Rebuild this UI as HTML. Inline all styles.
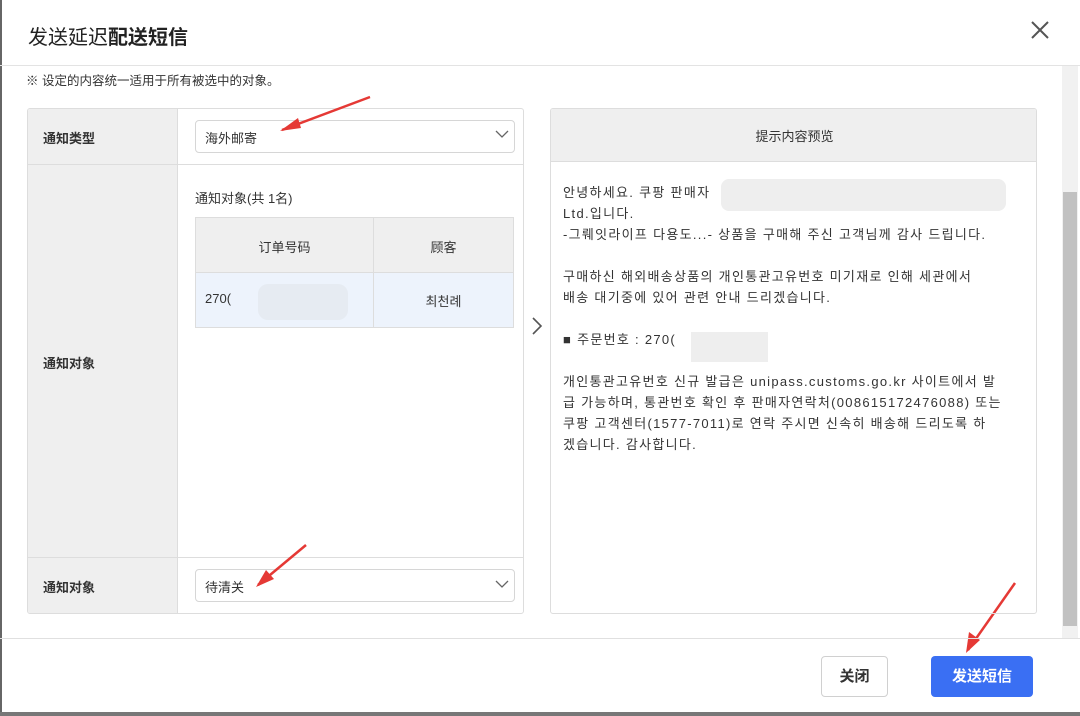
<!DOCTYPE html>
<html><head><meta charset="utf-8"><style>
*{box-sizing:border-box;margin:0;padding:0}
body{width:1080px;height:716px;background:#fff;font-family:"Liberation Sans","Noto Sans CJK SC",sans-serif;color:#333;position:relative;overflow:hidden}
.a{position:absolute}
.lbl{background:#efefef}
.t{font-size:13px;line-height:21px;color:#333;font-family:"Liberation Sans","Noto Sans CJK KR",sans-serif;letter-spacing:1.3px;white-space:nowrap}
</style></head><body>
<div class="a" style="left:0;top:0;width:2px;height:716px;background:#666"></div>
<div class="a" style="left:0;top:712px;width:1080px;height:4px;background:#777"></div>
<div class="a" style="left:28px;top:21px;font-size:20px;color:#222">发送延迟<b>配送短信</b></div>
<svg class="a" style="left:1030px;top:20px" width="20" height="20"><path d="M2 2L18 18M18 2L2 18" stroke="#555" stroke-width="2"/></svg>
<div class="a" style="left:0;top:65px;width:1080px;height:1px;background:#e3e3e3"></div>
<div class="a" style="left:26px;top:70px;font-size:12.5px;color:#333">※ 设定的内容统一适用于所有被选中的对象。</div>
<div class="a" style="left:1062px;top:66px;width:16px;height:573px;background:#f1f1f1"></div>
<div class="a" style="left:1063px;top:192px;width:14px;height:434px;background:#c1c1c1"></div>
<div class="a" style="left:27px;top:108px;width:497px;height:506px;border:1px solid #ddd;border-radius:3px;overflow:hidden">
 <div class="a lbl" style="left:0;top:0;width:150px;height:504px;border-right:1px solid #ddd"></div>
 <div class="a" style="left:0;top:55px;width:497px;height:1px;background:#ddd"></div>
 <div class="a" style="left:0;top:448px;width:497px;height:1px;background:#ddd"></div>
 <div class="a" style="left:15px;top:19px;font-size:13px;font-weight:bold">通知类型</div>
 <div class="a" style="left:15px;top:244px;font-size:13px;font-weight:bold">通知对象</div>
 <div class="a" style="left:15px;top:468px;font-size:13px;font-weight:bold">通知对象</div>
 <div class="a" style="left:167px;top:11px;width:320px;height:33px;border:1px solid #d6d6d6;border-radius:4px;font-size:13px;padding:7px 9px">海外邮寄</div>
 <div class="a" style="left:167px;top:460px;width:320px;height:33px;border:1px solid #d6d6d6;border-radius:4px;font-size:13px;padding:7px 9px">待清关</div>
 <div class="a" style="left:167px;top:79px;font-size:13px">通知对象(共 1名)</div>
 <div class="a" style="left:167px;top:108px;width:319px;height:111px;border:1px solid #ddd">
  <div class="a" style="left:0;top:0;width:317px;height:55px;background:#efefef;border-bottom:1px solid #ddd"></div>
  <div class="a" style="left:0;top:55px;width:317px;height:54px;background:#edf3fc"></div>
  <div class="a" style="left:177px;top:0;width:1px;height:109px;background:#ddd"></div>
  <div class="a" style="left:0;top:19px;width:177px;text-align:center;font-size:13px">订单号码</div>
  <div class="a" style="left:178px;top:19px;width:139px;text-align:center;font-size:13px">顾客</div>
  <div class="a" style="left:9px;top:73px;font-size:13px">270(</div>
  <div class="a" style="left:62px;top:66px;width:90px;height:36px;background:#e4e8ef;border-radius:10px;opacity:.8"></div>
  <div class="a" style="left:178px;top:73px;width:139px;text-align:center;font-size:13px;font-family:'Noto Sans CJK KR',sans-serif">최천례</div>
 </div>
</div>
<svg class="a" style="left:0;top:0" width="1080" height="716">
<path d="M282 130L370 97" stroke="#e53935" stroke-width="2.5"/><path d="M280 131L298 118L301 128Z" fill="#e53935"/>
<path d="M258 585L306 545" stroke="#e53935" stroke-width="2.5"/><path d="M256 587L266 570L274 579Z" fill="#e53935"/>
<path d="M968 650L1015 583" stroke="#e53935" stroke-width="2.5"/><path d="M966 653L969 632L980 640Z" fill="#e53935"/>
<path d="M533 318L541 326L533 334" fill="none" stroke="#555" stroke-width="1.6"/>
<path d="M496 131L502 137L508 131" fill="none" stroke="#666" stroke-width="1.3"/>
<path d="M496 581L502 587L508 581" fill="none" stroke="#666" stroke-width="1.3"/>
</svg>
<div class="a" style="left:550px;top:108px;width:487px;height:506px;border:1px solid #ddd;border-radius:3px;overflow:hidden">
 <div class="a lbl" style="left:0;top:0;width:487px;height:53px;border-bottom:1px solid #ddd;text-align:center;font-size:13px;padding-top:17px">提示内容预览</div>
 <div class="a t" style="left:12px;top:73px;width:470px">안녕하세요. 쿠팡 판매자<br>Ltd.입니다.<br>-그뤠잇라이프 다용도...- 상품을 구매해 주신 고객님께 감사 드립니다.<br><br>구매하신 해외배송상품의 개인통관고유번호 미기재로 인해 세관에서<br>배송 대기중에 있어 관련 안내 드리겠습니다.<br><br>■ 주문번호 : 270(<br><br>개인통관고유번호 신규 발급은 unipass.customs.go.kr 사이트에서 발<br>급 가능하며, 통관번호 확인 후 판매자연락처(008615172476088) 또는<br>쿠팡 고객센터(1577-7011)로 연락 주시면 신속히 배송해 드리도록 하<br>겠습니다. 감사합니다.</div>
 <div class="a" style="left:170px;top:70px;width:285px;height:32px;background:#eeeeee;border-radius:8px"></div>
 <div class="a" style="left:140px;top:223px;width:77px;height:30px;background:#eeeeee"></div>
</div>
<div class="a" style="left:0;top:638px;width:1080px;height:1px;background:#e0e0e0"></div>
<div class="a" style="left:821px;top:656px;width:67px;height:41px;border:1px solid #d0d0d0;border-radius:4px;text-align:center;font-size:15px;font-weight:bold;line-height:39px">关闭</div>
<div class="a" style="left:931px;top:656px;width:102px;height:41px;background:#3a6ff3;border-radius:4px;text-align:center;font-size:15px;font-weight:bold;line-height:41px;color:#fff">发送短信</div>
</body></html>
